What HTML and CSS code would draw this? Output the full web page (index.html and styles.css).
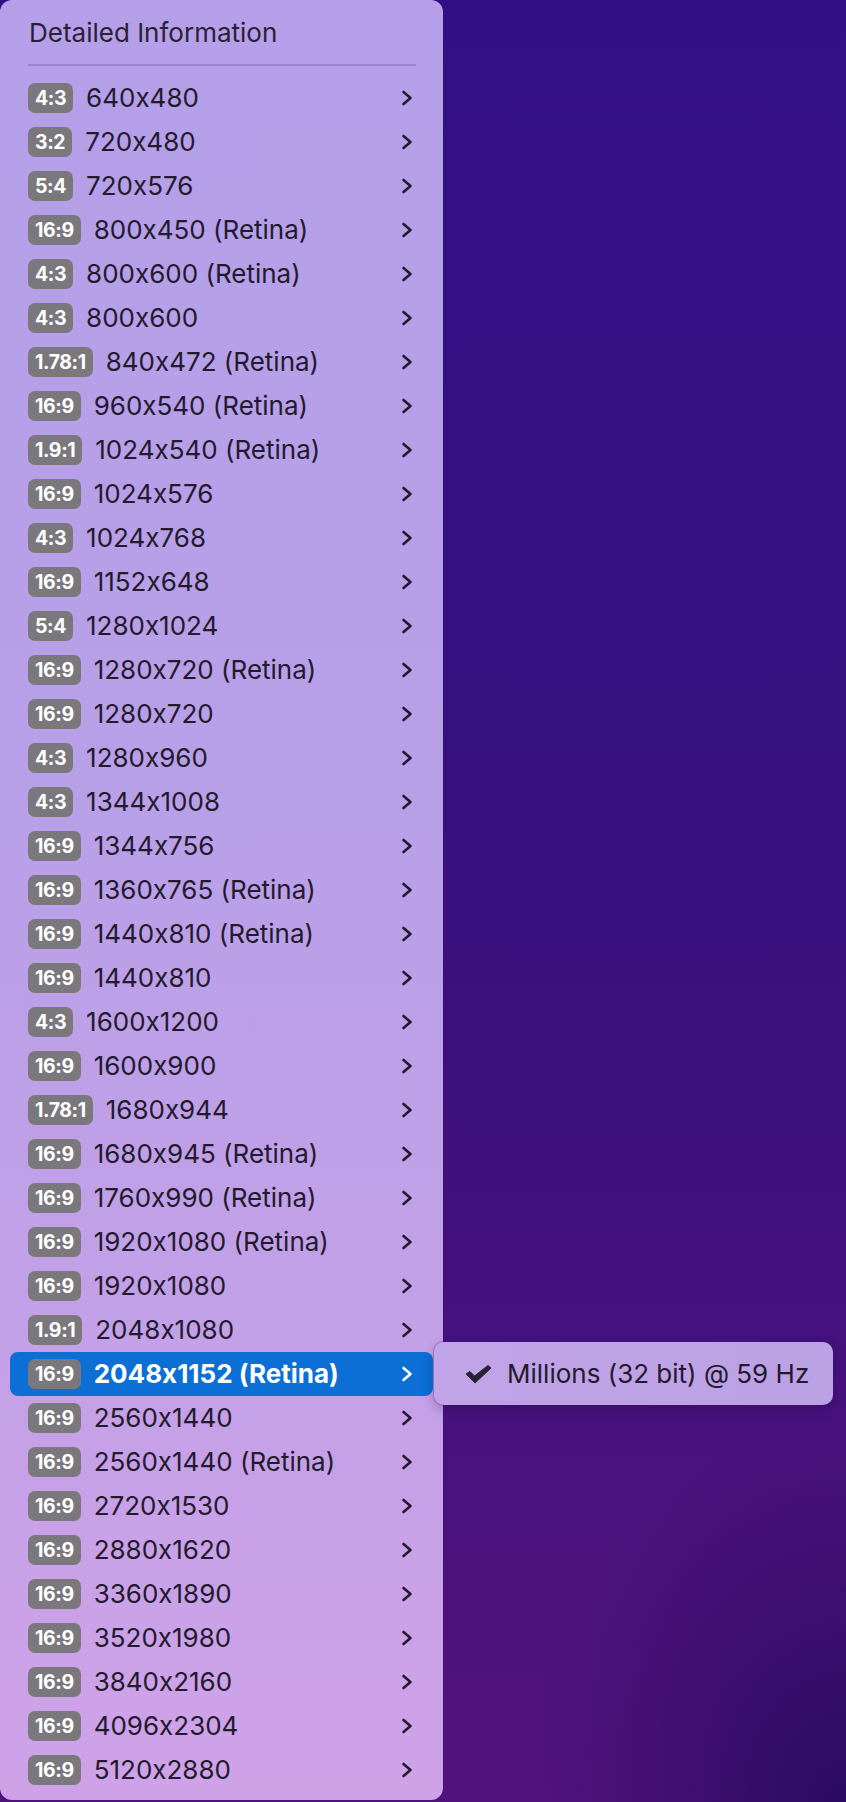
FILE: index.html
```html
<!DOCTYPE html>
<html>
<head>
<meta charset="utf-8">
<link rel="stylesheet" href="styles.css">
</head>
<body>
<div class="screen">
  <div class="menu">
    <div class="header">Detailed Information</div>
    <div class="sep"></div>
    <div class="list">
      <div class="row"><span class="badge">4:3</span><span class="label">640x480</span><svg class="chev" viewBox="0 0 12 16"><path d="M2.5 2 L9.5 8 L2.5 14"/></svg></div>
      <div class="row"><span class="badge">3:2</span><span class="label">720x480</span><svg class="chev" viewBox="0 0 12 16"><path d="M2.5 2 L9.5 8 L2.5 14"/></svg></div>
      <div class="row"><span class="badge">5:4</span><span class="label">720x576</span><svg class="chev" viewBox="0 0 12 16"><path d="M2.5 2 L9.5 8 L2.5 14"/></svg></div>
      <div class="row"><span class="badge">16:9</span><span class="label">800x450 (Retina)</span><svg class="chev" viewBox="0 0 12 16"><path d="M2.5 2 L9.5 8 L2.5 14"/></svg></div>
      <div class="row"><span class="badge">4:3</span><span class="label">800x600 (Retina)</span><svg class="chev" viewBox="0 0 12 16"><path d="M2.5 2 L9.5 8 L2.5 14"/></svg></div>
      <div class="row"><span class="badge">4:3</span><span class="label">800x600</span><svg class="chev" viewBox="0 0 12 16"><path d="M2.5 2 L9.5 8 L2.5 14"/></svg></div>
      <div class="row"><span class="badge">1.78:1</span><span class="label">840x472 (Retina)</span><svg class="chev" viewBox="0 0 12 16"><path d="M2.5 2 L9.5 8 L2.5 14"/></svg></div>
      <div class="row"><span class="badge">16:9</span><span class="label">960x540 (Retina)</span><svg class="chev" viewBox="0 0 12 16"><path d="M2.5 2 L9.5 8 L2.5 14"/></svg></div>
      <div class="row"><span class="badge">1.9:1</span><span class="label">1024x540 (Retina)</span><svg class="chev" viewBox="0 0 12 16"><path d="M2.5 2 L9.5 8 L2.5 14"/></svg></div>
      <div class="row"><span class="badge">16:9</span><span class="label">1024x576</span><svg class="chev" viewBox="0 0 12 16"><path d="M2.5 2 L9.5 8 L2.5 14"/></svg></div>
      <div class="row"><span class="badge">4:3</span><span class="label">1024x768</span><svg class="chev" viewBox="0 0 12 16"><path d="M2.5 2 L9.5 8 L2.5 14"/></svg></div>
      <div class="row"><span class="badge">16:9</span><span class="label">1152x648</span><svg class="chev" viewBox="0 0 12 16"><path d="M2.5 2 L9.5 8 L2.5 14"/></svg></div>
      <div class="row"><span class="badge">5:4</span><span class="label">1280x1024</span><svg class="chev" viewBox="0 0 12 16"><path d="M2.5 2 L9.5 8 L2.5 14"/></svg></div>
      <div class="row"><span class="badge">16:9</span><span class="label">1280x720 (Retina)</span><svg class="chev" viewBox="0 0 12 16"><path d="M2.5 2 L9.5 8 L2.5 14"/></svg></div>
      <div class="row"><span class="badge">16:9</span><span class="label">1280x720</span><svg class="chev" viewBox="0 0 12 16"><path d="M2.5 2 L9.5 8 L2.5 14"/></svg></div>
      <div class="row"><span class="badge">4:3</span><span class="label">1280x960</span><svg class="chev" viewBox="0 0 12 16"><path d="M2.5 2 L9.5 8 L2.5 14"/></svg></div>
      <div class="row"><span class="badge">4:3</span><span class="label">1344x1008</span><svg class="chev" viewBox="0 0 12 16"><path d="M2.5 2 L9.5 8 L2.5 14"/></svg></div>
      <div class="row"><span class="badge">16:9</span><span class="label">1344x756</span><svg class="chev" viewBox="0 0 12 16"><path d="M2.5 2 L9.5 8 L2.5 14"/></svg></div>
      <div class="row"><span class="badge">16:9</span><span class="label">1360x765 (Retina)</span><svg class="chev" viewBox="0 0 12 16"><path d="M2.5 2 L9.5 8 L2.5 14"/></svg></div>
      <div class="row"><span class="badge">16:9</span><span class="label">1440x810 (Retina)</span><svg class="chev" viewBox="0 0 12 16"><path d="M2.5 2 L9.5 8 L2.5 14"/></svg></div>
      <div class="row"><span class="badge">16:9</span><span class="label">1440x810</span><svg class="chev" viewBox="0 0 12 16"><path d="M2.5 2 L9.5 8 L2.5 14"/></svg></div>
      <div class="row"><span class="badge">4:3</span><span class="label">1600x1200</span><svg class="chev" viewBox="0 0 12 16"><path d="M2.5 2 L9.5 8 L2.5 14"/></svg></div>
      <div class="row"><span class="badge">16:9</span><span class="label">1600x900</span><svg class="chev" viewBox="0 0 12 16"><path d="M2.5 2 L9.5 8 L2.5 14"/></svg></div>
      <div class="row"><span class="badge">1.78:1</span><span class="label">1680x944</span><svg class="chev" viewBox="0 0 12 16"><path d="M2.5 2 L9.5 8 L2.5 14"/></svg></div>
      <div class="row"><span class="badge">16:9</span><span class="label">1680x945 (Retina)</span><svg class="chev" viewBox="0 0 12 16"><path d="M2.5 2 L9.5 8 L2.5 14"/></svg></div>
      <div class="row"><span class="badge">16:9</span><span class="label">1760x990 (Retina)</span><svg class="chev" viewBox="0 0 12 16"><path d="M2.5 2 L9.5 8 L2.5 14"/></svg></div>
      <div class="row"><span class="badge">16:9</span><span class="label">1920x1080 (Retina)</span><svg class="chev" viewBox="0 0 12 16"><path d="M2.5 2 L9.5 8 L2.5 14"/></svg></div>
      <div class="row"><span class="badge">16:9</span><span class="label">1920x1080</span><svg class="chev" viewBox="0 0 12 16"><path d="M2.5 2 L9.5 8 L2.5 14"/></svg></div>
      <div class="row"><span class="badge">1.9:1</span><span class="label">2048x1080</span><svg class="chev" viewBox="0 0 12 16"><path d="M2.5 2 L9.5 8 L2.5 14"/></svg></div>
      <div class="row selected"><span class="badge">16:9</span><span class="label">2048x1152 (Retina)</span><svg class="chev" viewBox="0 0 12 16"><path d="M2.5 2 L9.5 8 L2.5 14"/></svg></div>
      <div class="row"><span class="badge">16:9</span><span class="label">2560x1440</span><svg class="chev" viewBox="0 0 12 16"><path d="M2.5 2 L9.5 8 L2.5 14"/></svg></div>
      <div class="row"><span class="badge">16:9</span><span class="label">2560x1440 (Retina)</span><svg class="chev" viewBox="0 0 12 16"><path d="M2.5 2 L9.5 8 L2.5 14"/></svg></div>
      <div class="row"><span class="badge">16:9</span><span class="label">2720x1530</span><svg class="chev" viewBox="0 0 12 16"><path d="M2.5 2 L9.5 8 L2.5 14"/></svg></div>
      <div class="row"><span class="badge">16:9</span><span class="label">2880x1620</span><svg class="chev" viewBox="0 0 12 16"><path d="M2.5 2 L9.5 8 L2.5 14"/></svg></div>
      <div class="row"><span class="badge">16:9</span><span class="label">3360x1890</span><svg class="chev" viewBox="0 0 12 16"><path d="M2.5 2 L9.5 8 L2.5 14"/></svg></div>
      <div class="row"><span class="badge">16:9</span><span class="label">3520x1980</span><svg class="chev" viewBox="0 0 12 16"><path d="M2.5 2 L9.5 8 L2.5 14"/></svg></div>
      <div class="row"><span class="badge">16:9</span><span class="label">3840x2160</span><svg class="chev" viewBox="0 0 12 16"><path d="M2.5 2 L9.5 8 L2.5 14"/></svg></div>
      <div class="row"><span class="badge">16:9</span><span class="label">4096x2304</span><svg class="chev" viewBox="0 0 12 16"><path d="M2.5 2 L9.5 8 L2.5 14"/></svg></div>
      <div class="row"><span class="badge">16:9</span><span class="label">5120x2880</span><svg class="chev" viewBox="0 0 12 16"><path d="M2.5 2 L9.5 8 L2.5 14"/></svg></div>
    </div>
  </div>
  <div class="submenu">
    <svg class="check" viewBox="0 0 28 20"><path d="M2 10 L6 7.5 L10.5 12 L24 1.5 L27 4 L11 19 Z"/></svg>
    <span class="sublabel">Millions (32 bit) @ 59 Hz</span>
  </div>
</div>
</body>
</html>
```
FILE: styles.css
```css
html, body {
  margin: 0;
  padding: 0;
}

body {
  width: 846px;
  height: 1802px;
  overflow: hidden;
  font-family: Inter, "Noto Sans", "Liberation Sans", sans-serif;
  font-feature-settings: "calt" 0;
  font-variant-ligatures: no-contextual;
  background:
    radial-gradient(ellipse 320px 380px at 100% 100%, #2b0a63 0%, rgba(43, 10, 99, 0) 100%),
    linear-gradient(180deg, #330f86 0%, #36107f 40%, #42117d 70%, #53137f 100%);
}

.screen {
  position: relative;
  width: 846px;
  height: 1802px;
}

.menu {
  width: 443px;
  box-sizing: border-box;
  padding-bottom: 8px;
  border-radius: 12px;
  background: linear-gradient(180deg, #b49fe8 0%, #b8a0e8 45%, #c2a0e7 72%, #cfa2e8 100%);
  box-shadow: 0 0 0 1px rgba(40, 10, 90, 0.25);
  color: #231a2e;
}

.header {
  height: 64px;
  box-sizing: border-box;
  padding: 17px 0 0 29px;
  font-size: 26px;
  line-height: 32px;
  color: #2a2136;
}

.sep {
  height: 2px;
  margin: 0 27px 0 28px;
  background: #9c82cf;
}

.list {
  padding-top: 10px;
}

.row {
  height: 44px;
  margin: 0 10px;
  padding: 0 20px 0 18px;
  display: flex;
  align-items: center;
  border-radius: 8px;
  font-size: 26px;
}

.badge {
  height: 30px;
  padding: 0 7px;
  border-radius: 7px;
  background: #7a787d;
  color: #ffffff;
  font-weight: 700;
  font-size: 19.5px;
  line-height: 30px;
  letter-spacing: -0.4px;
  margin-right: 13px;
}

.label {
  line-height: 44px;
}

.chev {
  margin-left: auto;
  width: 12px;
  height: 16px;
  fill: none;
  stroke: #231a2e;
  stroke-width: 2.6;
  stroke-linecap: round;
  stroke-linejoin: round;
}

.row.selected {
  background: #0b6fd6;
  color: #ffffff;
}

.row.selected .label {
  font-weight: 700;
}

.row.selected .chev {
  stroke: #ffffff;
}

.submenu {
  position: absolute;
  left: 434px;
  top: 1342px;
  width: 399px;
  height: 63px;
  box-sizing: border-box;
  padding-left: 30px;
  display: flex;
  align-items: center;
  border-radius: 10px;
  background: linear-gradient(90deg, #c1a3e8 0%, #bba2e4 100%);
  box-shadow: 0 0 0 1px rgba(60, 20, 110, 0.25), 0 4px 12px rgba(20, 0, 50, 0.25);
  font-size: 26px;
  color: #231a2e;
}

.check {
  width: 28px;
  height: 20px;
  margin-right: 15px;
  fill: #2a2136;
  stroke: #2a2136;
  stroke-width: 1;
  stroke-linejoin: round;
}

.sublabel {
  line-height: 63px;
}
```
